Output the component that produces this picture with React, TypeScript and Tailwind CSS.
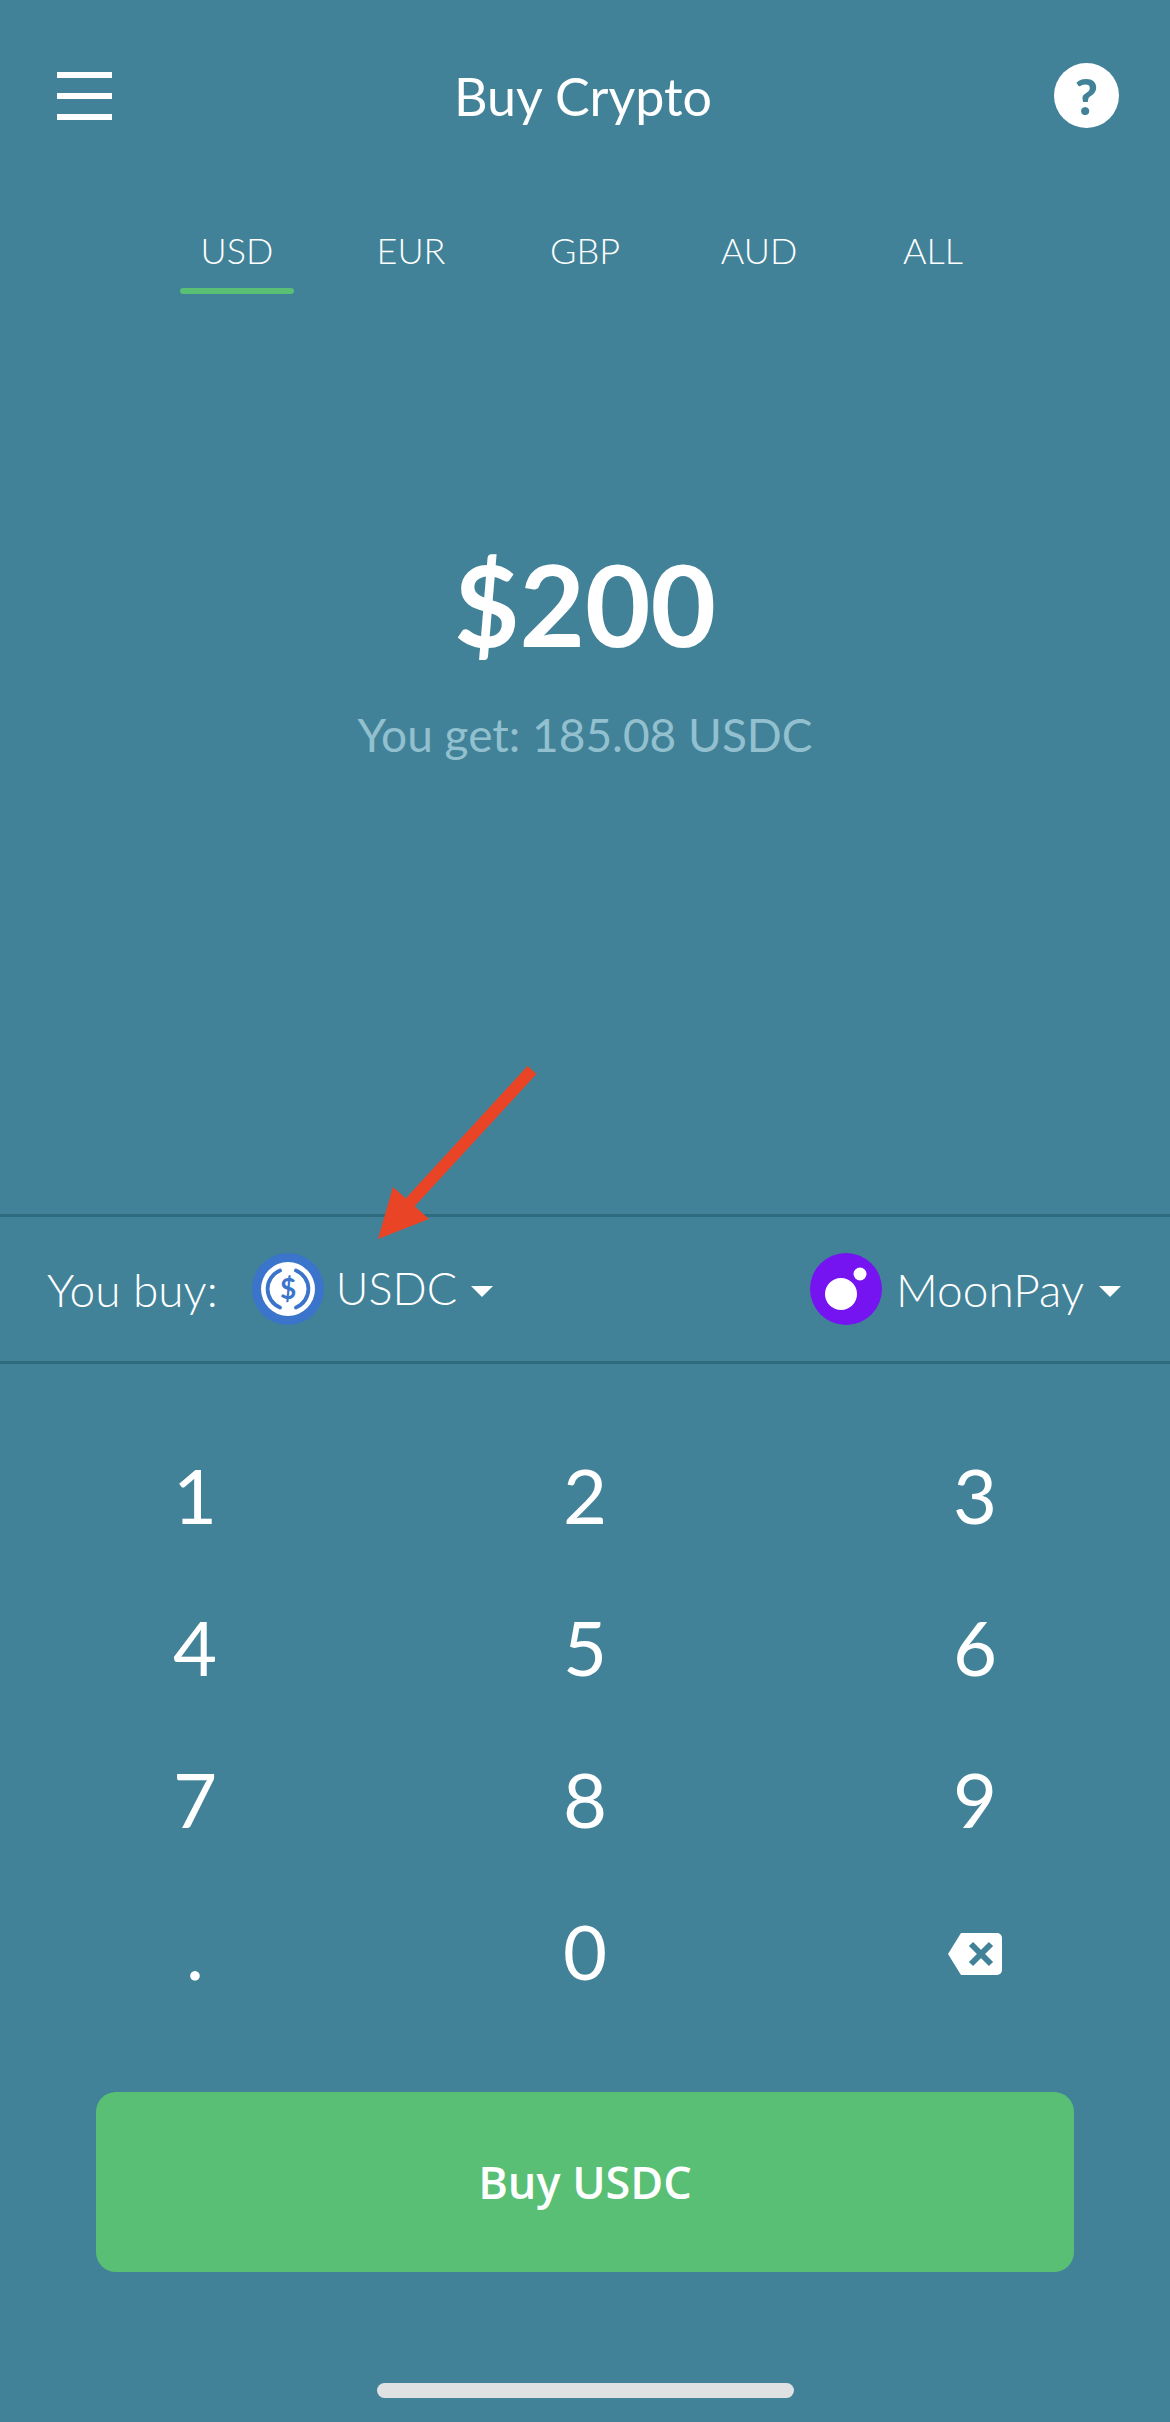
const TABS = ["USD", "EUR", "GBP", "AUD", "ALL"];
const KEYS = ["1", "2", "3", "4", "5", "6", "7", "8", "9", ".", "0"];

function Caret() {
  return <span className="h-0 w-0 border-x-[11px] border-t-[11px] border-x-transparent border-t-white" />;
}

function UsdcIcon() {
  return (
    <svg width="72" height="72" viewBox="0 0 72 72" className="shrink-0">
      <circle cx="36" cy="36" r="36" fill="#3a74cb" />
      <circle cx="36" cy="36" r="27" fill="#ffffff" />
      <path d="M28 17.5A20 20 0 0 0 28 54.5M44 17.5A20 20 0 0 1 44 54.5" fill="none" stroke="#3a74cb" strokeWidth="3.8" strokeLinecap="round" />
      <text x="36" y="46" textAnchor="middle" fontSize="28" fontWeight="700" fill="#3a74cb" fontFamily="Lato, sans-serif">$</text>
    </svg>
  );
}

function MoonPayIcon() {
  return (
    <svg width="72" height="72" viewBox="0 0 72 72" className="shrink-0">
      <circle cx="36" cy="36" r="36" fill="#7514f0" />
      <circle cx="31" cy="41" r="16" fill="#ffffff" />
      <circle cx="50" cy="21" r="6.5" fill="#ffffff" />
    </svg>
  );
}

export default function App() {
  return (
    <div className="relative flex h-[2422px] w-[1170px] flex-col overflow-hidden bg-[#418298] font-['Lato',sans-serif] text-white">
      {/* top bar */}
      <div className="mt-[63px] flex h-[65px] items-center justify-between pl-[57px] pr-[51px]">
        <button className="flex w-[55px] flex-col gap-[15px]">
          <span className="h-[6px] bg-white" />
          <span className="h-[6px] bg-white" />
          <span className="h-[6px] bg-white" />
        </button>
        <span className="text-[52px] leading-none">Buy Crypto</span>
        <span className="flex h-[65px] w-[65px] items-center justify-center rounded-full bg-white text-[50px] font-black leading-none text-[#418298]">?</span>
      </div>

      {/* currency tabs */}
      <div className="mx-auto mt-[100px] grid w-[870px] grid-cols-5">
        {TABS.map((t, i) => (
          <div key={t} className="flex flex-col items-center">
            <span className="text-[36px] font-light leading-[44px]">{t}</span>
            <span className={i === 0 ? "mt-[16px] h-[6px] w-[114px] rounded-full bg-[#59bf74]" : "mt-[16px] h-[6px] w-[114px]"} />
          </div>
        ))}
      </div>

      {/* amount */}
      <div className="mt-[244px] flex flex-col items-center">
        <span className="text-[113px] font-bold leading-[130px]">$200</span>
        <span className="mt-[40px] text-[46px] leading-[54px] text-[#93c0cf]">You get: 185.08 USDC</span>
      </div>

      {/* selector row */}
      <div className="mt-[452px] flex h-[150px] items-center justify-between border-y-[3px] border-[#2f6b7e] pl-[47px] pr-[49px] text-[46px] font-light">
        <div className="flex items-center">
          <span>You buy:</span>
          <span className="ml-[34px]"><UsdcIcon /></span>
          <span className="ml-[12px] text-[45px]">USDC</span>
          <span className="ml-[14px] mt-[4px] flex"><Caret /></span>
        </div>
        <div className="flex items-center">
          <MoonPayIcon />
          <span className="ml-[14px]">MoonPay</span>
          <span className="ml-[15px] mt-[4px] flex"><Caret /></span>
        </div>
      </div>

      {/* keypad */}
      <div className="mt-[55px] grid auto-rows-[152px] grid-cols-3 text-[76px] leading-none">
        {KEYS.map((k) => (
          <div key={k} className="flex items-center justify-center">
            {k}
          </div>
        ))}
        <div className="flex items-center justify-center">
          <svg width="54" height="42" viewBox="0 0 54 42" className="mt-[6px]">
            <path d="M13 0H49a5 5 0 0 1 5 5V37a5 5 0 0 1-5 5H13L0 21Z" fill="#ffffff" />
            <path d="M23 11L43 31M43 11L23 31" stroke="#418298" strokeWidth="6" fill="none" />
          </svg>
        </div>
      </div>

      {/* buy button */}
      <button className="mx-auto mt-[65px] flex h-[180px] w-[978px] shrink-0 items-center justify-center rounded-[20px] bg-[#59bf74] font-['Open_Sans',sans-serif] text-[45px] font-semibold">
        Buy USDC
      </button>

      {/* home indicator */}
      <div className="mx-auto mt-[111px] h-[15px] w-[417px] shrink-0 rounded-full bg-[#e0e1e3]" />

      {/* red annotation arrow */}
      <svg className="absolute left-[370px] top-[1060px]" width="170" height="185" viewBox="370 1060 170 185">
        <path d="M532 1070L405 1208" stroke="#e94425" strokeWidth="12" fill="none" />
        <path d="M378 1239L393 1187L429 1219Z" fill="#e94425" />
      </svg>
    </div>
  );
}
